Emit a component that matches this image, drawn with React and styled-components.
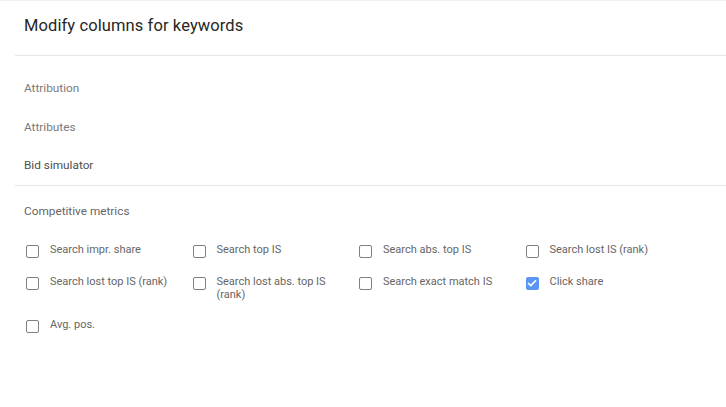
import React from 'react';
import styled, { createGlobalStyle } from 'styled-components';

const GlobalStyle = createGlobalStyle`
  html, body {
    margin: 0;
    padding: 0;
    background: #fff;
  }
  body {
    font-family: Roboto, "Liberation Sans", Arial, sans-serif;
    -webkit-font-smoothing: antialiased;
  }
`;

const Panel = styled.div`
  width: 726px;
  height: 407px;
  border-top: 1px solid #f1f1f1;
  box-sizing: border-box;
  padding-left: 15px;
  overflow: hidden;
`;

const Header = styled.div`
  height: 55px;
  box-sizing: border-box;
  padding: 15px 0 0 9px;
  border-bottom: 1px solid #e6e6e6;
`;

const Title = styled.h1`
  margin: 0;
  font-size: 16.5px;
  line-height: 20px;
  font-weight: 400;
  color: #262626;
  letter-spacing: 0.1px;
`;

const Categories = styled.div`
  padding-top: 13px;
  border-bottom: 1px solid #e6e6e6;
`;

const Category = styled.div`
  height: 38.5px;
  line-height: 38.5px;
  padding-left: 9px;
  font-size: 11.8px;
  color: ${p => (p.$dark ? '#4f4f4f' : '#7a7a7a')};
`;

const Group = styled.div`
  padding: 19px 0 0 9px;
`;

const GroupTitle = styled.div`
  font-size: 11.8px;
  line-height: 13px;
  color: #666;
`;

const Grid = styled.div`
  display: grid;
  grid-template-columns: repeat(4, 166.5px);
  row-gap: 17px;
  margin-top: 25px;
  padding-left: 2px;
`;

const Option = styled.label`
  display: flex;
  align-items: flex-start;
`;

const Box = styled.span`
  flex: none;
  width: 13px;
  height: 13px;
  margin-top: 2px;
  margin-right: 11px;
  box-sizing: border-box;
  border-radius: 2px;
  border: ${p => (p.$checked ? 'none' : '1.5px solid #808080')};
  background: ${p => (p.$checked ? '#5b96f5' : 'transparent')};
  display: flex;
  align-items: center;
  justify-content: center;
`;

const Label = styled.span`
  font-size: 11px;
  line-height: 13px;
  color: #666;
  max-width: 130px;
`;

const options = [
  { label: 'Search impr. share' },
  { label: 'Search top IS' },
  { label: 'Search abs. top IS' },
  { label: 'Search lost IS (rank)' },
  { label: 'Search lost top IS (rank)' },
  { label: 'Search lost abs. top IS (rank)' },
  { label: 'Search exact match IS' },
  { label: 'Click share', checked: true },
  { label: 'Avg. pos.' },
];

const Check = () => (
  <svg width="10" height="8" viewBox="0 0 10 8">
    <path d="M1 4 L3.8 6.6 L9 1.2" fill="none" stroke="#fff" strokeWidth="1.6" />
  </svg>
);

export default function App() {
  return (
    <>
      <GlobalStyle />
      <Panel>
        <Header>
          <Title>Modify columns for keywords</Title>
        </Header>
        <Categories>
          <Category>Attribution</Category>
          <Category>Attributes</Category>
          <Category $dark>Bid simulator</Category>
        </Categories>
        <Group>
          <GroupTitle>Competitive metrics</GroupTitle>
          <Grid>
            {options.map(o => (
              <Option key={o.label}>
                <Box $checked={o.checked}>{o.checked && <Check />}</Box>
                <Label>{o.label}</Label>
              </Option>
            ))}
          </Grid>
        </Group>
      </Panel>
    </>
  );
}
